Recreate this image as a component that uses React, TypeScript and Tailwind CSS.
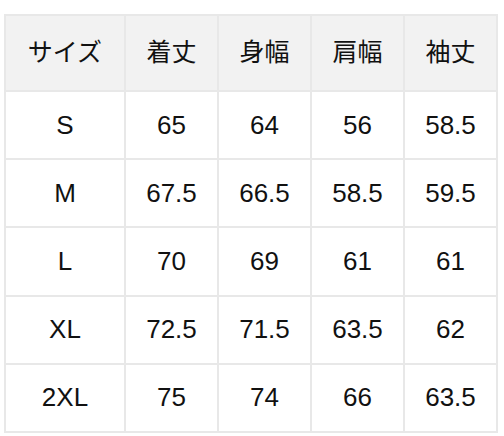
import React from "react";

const headers = ["サイズ", "着丈", "身幅", "肩幅", "袖丈"];
const rows = [
  ["S", "65", "64", "56", "58.5"],
  ["M", "67.5", "66.5", "58.5", "59.5"],
  ["L", "70", "69", "61", "61"],
  ["XL", "72.5", "71.5", "63.5", "62"],
  ["2XL", "75", "74", "66", "63.5"],
];

export default function App() {
  return (
    <div
      className="w-[504px] h-[436px] bg-white pt-[14px] pl-[4px]"
      style={{ fontFamily: '"Liberation Sans", Arial, "Noto Sans CJK JP", sans-serif' }}
    >
      <div className="grid w-[494px] bg-[#e8e8e8] p-[2px] gap-[2px] grid-cols-[118px_91px_91px_91px_91px] grid-rows-[74px_repeat(5,66.2px)]">
        {headers.map((h) => (
          <div
            key={h}
            className="bg-[#f2f2f2] flex items-center justify-center text-[25px] text-[#111]"
          >
            {h}
          </div>
        ))}
        {rows.map((r) =>
          r.map((c, i) => (
            <div
              key={r[0] + i}
              className="bg-white flex items-center justify-center text-[26px] text-[#111]"
            >
              {c}
            </div>
          ))
        )}
      </div>
    </div>
  );
}
